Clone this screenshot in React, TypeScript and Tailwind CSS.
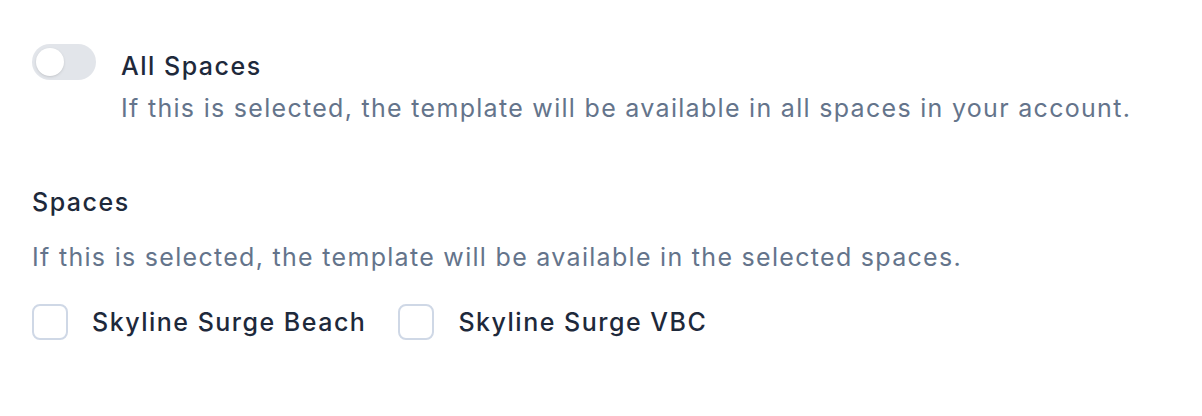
import * as React from "react";

const spaces = ["Skyline Surge Beach", "Skyline Surge VBC"];

export default function App() {
  const [allSpaces, setAllSpaces] = React.useState(false);
  const [picked, setPicked] = React.useState<string[]>([]);

  function toggleSpace(name: string) {
    setPicked((p) => (p.includes(name) ? p.filter((n) => n !== name) : [...p, name]));
  }

  return (
    <div className="min-h-[416px] w-[1202px] bg-white pl-8 pt-[44px] font-['Inter',sans-serif] text-[25px] leading-[36px] tracking-[0.052em]">
      <div className="flex items-start gap-[25px]">
        <button
          type="button"
          role="switch"
          aria-checked={allSpaces}
          onClick={() => setAllSpaces((v) => !v)}
          className={
            "relative h-9 w-16 shrink-0 rounded-full transition-colors " +
            (allSpaces ? "bg-[#1e293b]" : "bg-[#e2e5ea]")
          }
        >
          <span
            className={
              "absolute top-1 left-1 h-7 w-7 rounded-full bg-white shadow-sm transition-transform " +
              (allSpaces ? "translate-x-7" : "translate-x-0")
            }
          />
        </button>
        <div className="mt-1">
          <div className="font-[550] tracking-[0.06em] text-[#1e293b]">All Spaces</div>
          <p className="mt-[6px] text-[#64748b]">
            If this is selected, the template will be available in all spaces in your account.
          </p>
        </div>
      </div>

      <div className="mt-[58px]">
        <div className="font-[550] tracking-[0.06em] text-[#1e293b]">Spaces</div>
        <p className="mt-[19px] text-[#64748b]">
          If this is selected, the template will be available in the selected spaces.
        </p>
        <div className="mt-[29px] flex items-center gap-8">
          {spaces.map((s) => (
            <label key={s} className="flex cursor-pointer items-center gap-6">
              <input
                type="checkbox"
                checked={picked.includes(s)}
                onChange={() => toggleSpace(s)}
                className="h-9 w-9 appearance-none rounded-lg border-2 border-[#cfd8e6] bg-white checked:bg-[#1e293b]"
              />
              <span className="font-[550] tracking-[0.06em] text-[#1e293b]">{s}</span>
            </label>
          ))}
        </div>
      </div>
    </div>
  );
}
